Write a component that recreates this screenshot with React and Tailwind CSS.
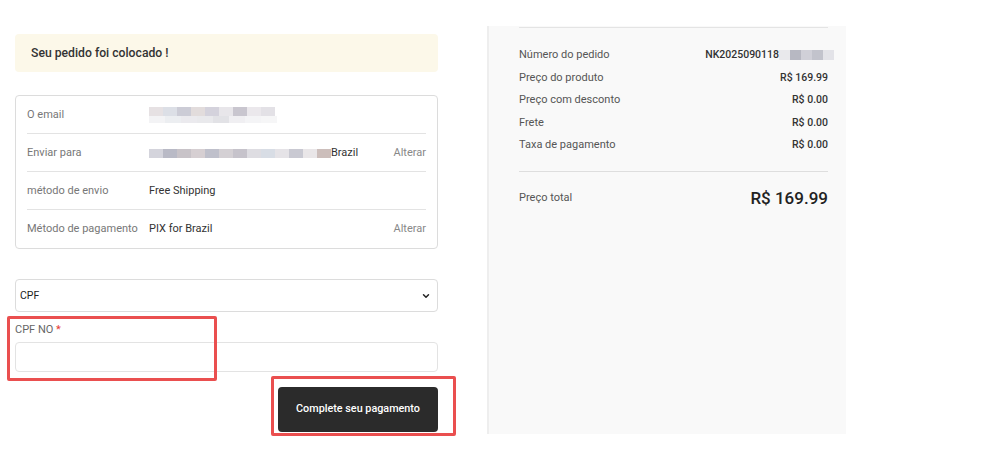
const emailTop = ["#e6e1e3", "#dcdfe6", "#ccccd6", "#e2dcdc", "#d4d2dc", "#e8e6ea", "#c9c6cf", "#ebe8ec", "#e3e1e6"];
const emailBottom = ["#f3f3f5", "#eceef1", "#ebeaee", "#e9e9ec", "#e2e2e6", "#f0eff2", "#f4f4f6", "#f6f6f7"];
const addr = ["#d4d4dc", "#b9bac6", "#c8c3c8", "#d6cfd2", "#bfc0cb", "#d4d0d4", "#c6c3cb", "#dedde2", "#d8dde5", "#e5e3e7", "#c9c9d2", "#e9e6e8", "#ccbebb"];
const orderBlur = ["#e9e9ec", "#b7b8c2", "#d0d0d8", "#c2c3cc", "#e3e3e8"];

function Pixels({ colors, w, h }) {
    return (
        <div className="flex">
            {colors.map((c, i) => (
                <div key={i} className={`${w} ${h}`} style={{ backgroundColor: c }} />
            ))}
        </div>
    );
}

function InfoRow({ label, children, action, last }) {
    return (
        <div className={`flex items-center h-[38px] pt-[1px] whitespace-nowrap ${last ? "" : "border-b border-[#e3e3e3]"}`}>
            <div className="w-[122px] text-[#777]">{label}</div>
            <div className="flex-1 text-[#333]">{children}</div>
            {action && <div className="text-[#888]">{action}</div>}
        </div>
    );
}

function SummaryRow({ label, value }) {
    return (
        <div className="flex items-center justify-between h-[22.5px]">
            <span className="text-[#555]">{label}</span>
            <span className="text-[#333] font-medium text-[10.5px]">{value}</span>
        </div>
    );
}

export default function App() {
    return (
        <div className="relative w-[1000px] h-[456px] bg-white flex text-[11px]"
            style={{ fontFamily: 'Roboto, "Noto Sans", sans-serif' }}>
            <div className="w-[423px] ml-[15px] pt-[34px] flex flex-col">
                <div className="h-[38px] bg-[#fcf8e9] rounded flex items-center px-[16px] text-[12.2px] font-medium text-[#333]">
                    Seu pedido foi colocado !
                </div>

                <div className="mt-[23px] border border-[#dcdcdc] rounded px-[11px]">
                    <InfoRow label="O email">
                        <div className="flex flex-col">
                            <Pixels colors={emailTop} w="w-[14px]" h="h-[9px]" />
                            <Pixels colors={emailBottom} w="w-[16px]" h="h-[7px]" />
                        </div>
                    </InfoRow>
                    <InfoRow label="Enviar para" action="Alterar">
                        <div className="flex items-center">
                            <Pixels colors={addr} w="w-[14px]" h="h-[9px]" />
                            <span>Brazil</span>
                        </div>
                    </InfoRow>
                    <InfoRow label="método de envio">Free Shipping</InfoRow>
                    <InfoRow label="Método de pagamento" action="Alterar" last>PIX for Brazil</InfoRow>
                </div>

                <div className="mt-[30px] h-[33px] border border-[#dcdcdc] rounded flex items-center justify-between pl-[4px] pr-[6px] text-[10.5px] text-[#222]">
                    <span>CPF</span>
                    <svg width="10" height="10" viewBox="0 0 24 24" fill="none" stroke="#222" strokeWidth="3.5" strokeLinecap="round" strokeLinejoin="round">
                        <path d="M6 9l6 6 6-6" />
                    </svg>
                </div>

                <div className="mt-[9px] leading-[18px] text-[#666]">
                    CPF NO <span className="text-[#e53935]">*</span>
                </div>
                <div className="mt-[3px] h-[30px] border border-[#e3e3e3] rounded" />

                <div className="flex justify-end mt-[15px]">
                    <button className="w-[160px] h-[45px] bg-[#2b2b2b] rounded text-white font-medium text-[10.8px]">
                        Complete seu pagamento
                    </button>
                </div>
            </div>

            <div className="ml-[49px] mt-[26px] w-[359px] h-[408px] bg-[#f9f9f9] border-l-2 border-[#eeeeee] pl-[30px] pr-[18px]">
                <div className="border-t border-[#e4e4e4] mt-[1px]" />
                <div className="mt-[16px]">
                    <div className="flex items-center justify-between h-[22.5px]">
                        <span className="text-[#555]">Número do pedido</span>
                        <div className="flex items-center -mr-[6px]">
                            <span className="text-[#333] font-medium text-[10.5px]">NK2025090118</span>
                            <Pixels colors={orderBlur} w="w-[11px]" h="h-[10px]" />
                        </div>
                    </div>
                    <SummaryRow label="Preço do produto" value="R$ 169.99" />
                    <SummaryRow label="Preço com desconto" value="R$ 0.00" />
                    <SummaryRow label="Frete" value="R$ 0.00" />
                    <SummaryRow label="Taxa de pagamento" value="R$ 0.00" />
                </div>
                <div className="border-t border-[#dedede] mt-[14px]" />
                <div className="flex items-center justify-between mt-[14px]">
                    <span className="text-[#555]">Preço total</span>
                    <span className="text-[17px] font-medium text-[#222]">R$ 169.99</span>
                </div>
            </div>

            <div className="absolute left-[7px] top-[316px] w-[210px] h-[65px] border-[3px] border-[#ea4f4f] rounded-[2px]" />
            <div className="absolute left-[271px] top-[376px] w-[185px] h-[60px] border-[3px] border-[#ea4f4f] rounded-[2px]" />
        </div>
    );
}
